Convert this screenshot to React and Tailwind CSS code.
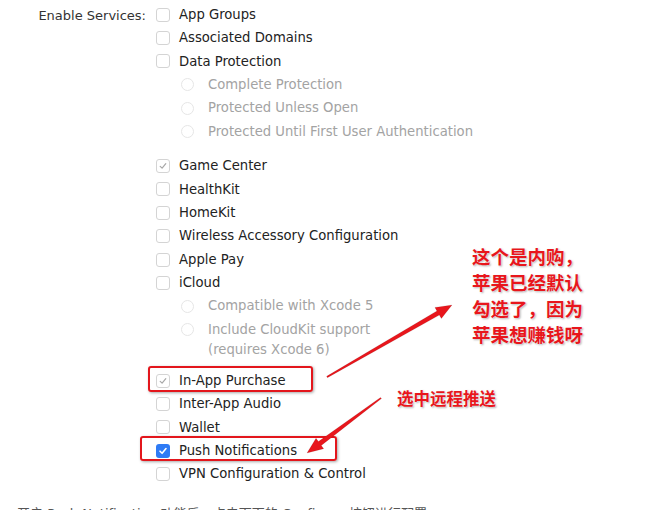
import React from 'react';

const font = { fontFamily: '"DejaVu Sans", "Noto Sans", sans-serif' };

const Box = ({ state }) => {
  if (state === 'on') {
    return (
      <span className="flex h-[14px] w-[14px] shrink-0 items-center justify-center rounded-[3px] bg-[#2f7bf5]">
        <svg width="10" height="10" viewBox="0 0 10 10">
          <path d="M2 5.2 L4.1 7.3 L8 2.6" fill="none" stroke="#fff" strokeWidth="1.6" strokeLinecap="round" strokeLinejoin="round" />
        </svg>
      </span>
    );
  }
  return (
    <span className="flex h-[14px] w-[14px] shrink-0 items-center justify-center rounded-[3px] border border-[#d4d4d4] bg-white">
      {state === 'dim' && (
        <svg width="10" height="10" viewBox="0 0 10 10">
          <path d="M2.2 5.3 L4.1 7.2 L7.8 2.6" fill="none" stroke="#a8a8a8" strokeWidth="1.2" strokeLinecap="round" strokeLinejoin="round" />
        </svg>
      )}
    </span>
  );
};

const Row = ({ label, state, className = '' }) => (
  <div className={`flex h-[23.4px] items-center ${className}`}>
    <Box state={state} />
    <span className="ml-[9px] text-[13.2px] text-[#222]">{label}</span>
  </div>
);

const Radio = ({ label, className = '' }) => (
  <div className={`flex h-[23.4px] items-center pl-[25px] ${className}`}>
    <span className="h-[13px] w-[13px] shrink-0 rounded-full border border-[#e6e6e6] bg-white" />
    <span className="ml-[14px] text-[13.2px] text-[#a3a3a3]">{label}</span>
  </div>
);

const arrow = (x1, y1, x2, y2, tail, body, headW, headL) => {
  const dx = x2 - x1;
  const dy = y2 - y1;
  const len = Math.hypot(dx, dy);
  const ux = dx / len;
  const uy = dy / len;
  const nx = -uy;
  const ny = ux;
  const bx = x2 - ux * headL;
  const by = y2 - uy * headL;
  const pts = [
    [x1 + nx * tail, y1 + ny * tail],
    [bx + nx * body, by + ny * body],
    [bx + nx * headW, by + ny * headW],
    [x2, y2],
    [bx - nx * headW, by - ny * headW],
    [bx - nx * body, by - ny * body],
    [x1 - nx * tail, y1 - ny * tail],
  ];
  return pts.map((p) => p.map((v) => v.toFixed(1)).join(',')).join(' ');
};

const cjk = {
  fontFamily: '"Noto Sans CJK SC", sans-serif',
};

export default function App() {
  return (
    <div className="relative h-[510px] w-[650px] overflow-hidden bg-white" style={font}>
      <div className="flex pt-[3px]">
        <div className="w-[146px] shrink-0 pt-[3px] text-right text-[13px] text-[#333]">Enable Services:</div>
        <div className="ml-[10px] flex flex-col">
          <Row label="App Groups" />
          <Row label="Associated Domains" />
          <Row label="Data Protection" />
          <Radio label="Complete Protection" />
          <Radio label="Protected Unless Open" />
          <Radio label="Protected Until First User Authentication" />

          <Row label="Game Center" state="dim" className="mt-[11px]" />
          <Row label="HealthKit" />
          <Row label="HomeKit" />
          <Row label="Wireless Accessory Configuration" />
          <Row label="Apple Pay" />
          <Row label="iCloud" />
          <Radio label="Compatible with Xcode 5" />
          <Radio label="Include CloudKit support" />
          <div className="flex h-[16px] items-center pl-[52px] text-[13.2px] text-[#a3a3a3]">(requires Xcode 6)</div>

          <Row label="In-App Purchase" state="dim" className="mt-[11.5px]" />
          <Row label="Inter-App Audio" />
          <Row label="Wallet" />
          <Row label="Push Notifications" state="on" />
          <Row label="VPN Configuration &amp; Control" />
        </div>
      </div>

      <div className="mt-[18px] pl-[17px] text-[13px] text-[#555]" style={{ fontFamily: '"DejaVu Sans", "Noto Sans CJK SC", sans-serif' }}>
        开启 Push Notification 功能后，点击下面的 Configure 按钮进行配置
      </div>

      {/* annotations */}
      <div className="absolute left-[148px] top-[366px] h-[26px] w-[165px] rounded-[3px] border-[2.5px] border-[#e3161c] shadow-[1px_1px_3px_rgba(0,0,0,0.35)]" />
      <div className="absolute left-[140px] top-[436px] h-[25px] w-[197px] rounded-[3px] border-[2.5px] border-[#e3161c] shadow-[1px_1px_3px_rgba(0,0,0,0.35)]" />

      <svg className="absolute left-0 top-0" width="650" height="510">
        <polygon points={arrow(327, 377, 452, 305, 0.8, 2.4, 6.5, 16)} fill="#e8161c" stroke="rgba(0,0,0,0.15)" strokeWidth="0.6" />
        <polygon points={arrow(381, 398, 307, 453, 0.8, 2.4, 6.5, 16)} fill="#e8161c" stroke="rgba(0,0,0,0.15)" strokeWidth="0.6" />
      </svg>

      <div
        className="absolute left-[472px] top-[243px] text-[18.5px] font-bold leading-[26px] text-[#e8161c] [text-shadow:0_0_2px_#fff,1px_1px_2px_rgba(0,0,0,0.35)]"
        style={cjk}
      >
        <div>这个是内购，</div>
        <div>苹果已经默认</div>
        <div>勾选了，因为</div>
        <div>苹果想赚钱呀</div>
      </div>

      <div
        className="absolute left-[397px] top-[386px] text-[16.5px] font-bold leading-[24px] text-[#e8161c] [text-shadow:0_0_2px_#fff,1px_1px_2px_rgba(0,0,0,0.35)]"
        style={cjk}
      >
        选中远程推送
      </div>
    </div>
  );
}
